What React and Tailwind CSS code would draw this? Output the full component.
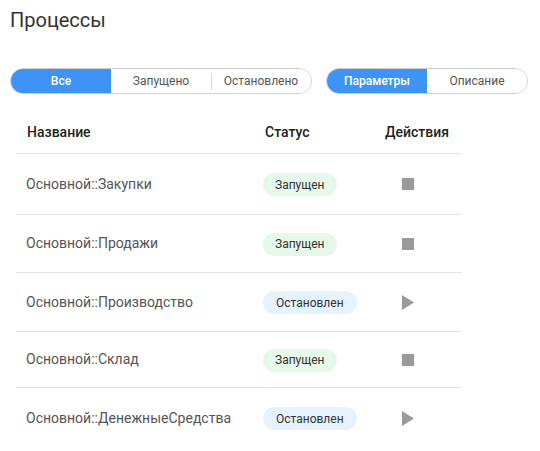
import { useState } from 'react'

const rows = [
  { name: 'Основной::Закупки', running: true, h: 'h-[61px] border-b' },
  { name: 'Основной::Продажи', running: true, h: 'h-[58px] border-b' },
  { name: 'Основной::Производство', running: false, h: 'h-[59px] border-b' },
  { name: 'Основной::Склад', running: true, h: 'h-[56px] border-b' },
  { name: 'Основной::ДенежныеСредства', running: false, h: 'h-[60px]' },
]

function Segmented({ items, active, onChange, dividers }) {
  return (
    <div className="flex h-[26px] rounded-full border border-[#cfcfcf] overflow-hidden">
      {items.map((it, i) => {
        const on = i === active
        const showDiv = dividers && i > 0 && i - 1 !== active && !on
        return (
          <button key={it} type="button" onClick={() => onChange(i)}
            className={'relative w-[100px] flex items-center justify-center text-[12px] ' +
              (on ? 'bg-[#3d94f6] text-white font-medium' : 'bg-white text-[#555]')}>
            {showDiv && <span className="absolute left-0 top-[4px] h-[17px] w-px bg-[#d4d4d4]" />}
            {it}
          </button>
        )
      })}
    </div>
  )
}

function StopIcon() {
  return <div className="w-[12px] h-[12px] bg-[#9a9a9a]" />
}

function PlayIcon() {
  return (
    <svg width="12" height="15" viewBox="0 0 12 15">
      <path d="M0 0 L12 7.5 L0 15 Z" fill="#9a9a9a" />
    </svg>
  )
}

export default function App() {
  const [filter, setFilter] = useState(0)
  const [tab, setTab] = useState(0)

  return (
    <div className="w-[540px] h-[451px] bg-white text-[#333] overflow-hidden"
      style={{ fontFamily: 'Roboto, "Noto Sans", sans-serif' }}>
      <h1 className="pt-[8px] pl-[10px] text-[20px] leading-[24px] font-normal text-[#333]">Процессы</h1>

      <div className="mt-[36px] ml-[10px] flex gap-[14px]">
        <Segmented items={['Все', 'Запущено', 'Остановлено']} active={filter} onChange={setFilter} dividers />
        <Segmented items={['Параметры', 'Описание']} active={tab} onChange={setTab} />
      </div>

      <div className="ml-[16px] mt-[17px] w-[446px]">
        <div className="grid grid-cols-[239px_115px_92px] h-[43px] items-center border-b border-[#e3e3e3] text-[14px] font-medium text-[#222]">
          <div className="pl-[11px]">Название</div>
          <div className="pl-[10px]">Статус</div>
          <div className="pl-[15px]">Действия</div>
        </div>
        {rows.map(r => (
          <div key={r.name} className={'grid grid-cols-[239px_115px_92px] items-center border-[#e3e3e3] ' + r.h}>
            <div className="pl-[10px] text-[14px] text-[#555]">{r.name}</div>
            <div className="pl-[8px]">
              {r.running
                ? <span className="inline-flex items-center h-[23px] px-[12px] rounded-full bg-[#e5f8ea] text-[12px] text-[#333]">Запущен</span>
                : <span className="inline-flex items-center h-[23px] px-[13px] rounded-full bg-[#e6f2fd] text-[12px] text-[#333]">Остановлен</span>}
            </div>
            <div className="pl-[32px] flex items-center">
              {r.running ? <StopIcon /> : <PlayIcon />}
            </div>
          </div>
        ))}
      </div>
    </div>
  )
}
